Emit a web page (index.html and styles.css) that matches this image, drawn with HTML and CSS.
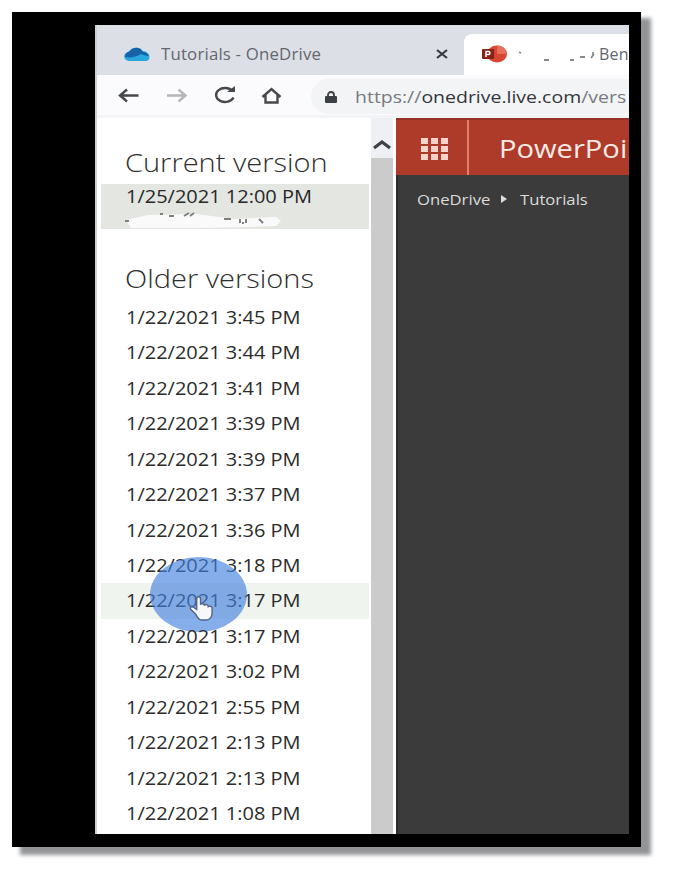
FILE: index.html
```
<!DOCTYPE html>
<html lang="en">
<head>
<meta charset="utf-8">
<title>Version history</title>
<link rel="stylesheet" href="styles.css">
</head>
<body>
<main class="frame">
  <div class="window">
    <div class="tabs">
      <div class="tab">
        <svg class="cloud" viewBox="0 0 26 16"><path d="M5 15a4.500 4.500 0 0 1-.5-9C7 1 15 0 18.500 5c4 0 7 3 7 6a4 4 0 0 1-4 4z" fill="#2aa7df"/><path d="M1 11C1 7 4 6 6 5c4-5 11-4 13 1 3 0 5 2 6 4-3 0-5-1-8-2-5 3-10 4-16 3z" fill="#1763a5"/></svg>
        <span class="tab-name">Tutorials - OneDrive</span>
        <svg class="close" viewBox="0 0 12 10"><path d="M1 1l10 8M11 1L1 9" stroke="#333940" stroke-width="2.200"/></svg>
      </div>
      <div class="tab active">
        <svg class="ppt" viewBox="0 0 26 18"><ellipse cx="15" cy="9" rx="10" ry="8.500" fill="#d84532"/><path d="M15 .5A10 8.500 0 0 1 25 9H15z" fill="#e8705a"/><rect x="0" y="4" width="12" height="10" rx="1" fill="#8a2119"/><path d="M4 12V6.500h2.500a1.500 1.500 0 0 1 0 3H4" fill="none" stroke="#fff" stroke-width="1.500"/></svg>
        <svg class="smudge" viewBox="0 0 80 20"><path d="M4 8l2 1M29 16h5M55 16h4M65 13h5M76 14l3-4M78 8v3" stroke="#888b8e" stroke-width="1.800" fill="none"/></svg>
        <span class="tab-name ben">Ben</span>
      </div>
    </div>
    <div class="toolbar">
      <svg class="nav" viewBox="0 0 170 40"><g fill="none" stroke="#45484c" stroke-width="2.400"><path d="M41.500 20.500h-18M30 14.500l-7 6 7 6"/><path d="M70 20.500h18M81.500 14.500l7 6-7 6" stroke="#b4b6b9"/><path d="M135.500 16a9 7 0 1 0 1 6.500"/><path d="M165.500 22l9-8 9 8M168.500 20v7.500h12V20"/></g><path d="M130 17h8v-6z" fill="#45484c"/></svg>
      <div class="address">
        <svg class="lock" viewBox="0 0 12 12"><path d="M3 6V4a3 3 0 0 1 6 0v2" fill="none" stroke="#3c4044" stroke-width="1.800"/><rect y="5" width="12" height="7" rx="1" fill="#3c4044"/></svg>
        <span class="url">https://<b>onedrive.live.com</b>/vers</span>
      </div>
    </div>
    <div class="page">
      <aside class="versions">
        <h2 class="current-title">Current version</h2>
        <div class="selected">
          <div class="date">1/25/2021 12:00 PM</div>
          <svg class="author" viewBox="0 0 170 20"><path d="M1 10l22-5 48-1 39 5 41-2 5 4-5 5-28 1-55 1H6z" fill="#fafafa"/><path d="M0 11h4M35 4h3M44 6h5M59 6l5-3M65 6l4-3M99 9h7M115 9v4M117 13h2M121 9v4M134 9l4 4" stroke="#7f817f" stroke-width="2" fill="none"/></svg>
        </div>
        <h2 class="older-title">Older versions</h2>
        <ul class="list">
          <li><span class="stamp">1/22/2021 3:45 PM</span></li>
          <li><span class="stamp">1/22/2021 3:44 PM</span></li>
          <li><span class="stamp">1/22/2021 3:41 PM</span></li>
          <li><span class="stamp">1/22/2021 3:39 PM</span></li>
          <li><span class="stamp">1/22/2021 3:39 PM</span></li>
          <li><span class="stamp">1/22/2021 3:37 PM</span></li>
          <li><span class="stamp">1/22/2021 3:36 PM</span></li>
          <li><span class="stamp">1/22/2021 3:18 PM</span></li>
          <li class="hover"><span class="stamp">1/22/2021 3:17 PM</span>
            <span class="halo"></span>
            <svg class="hand" viewBox="0 0 26 28"><path d="M7 20l-5-5c-2-2 1-4 3-2l3 2V4c0-3 4-3 4 0v6c1-2 4-1 4 1 1-2 4-1 4 1 2-1 4 0 4 2v5c0 4-3 7-6 7h-5c-3 0-4-3-6-6z" fill="#f7f8fb" stroke="#53648a" stroke-width="1.500"/></svg>
          </li>
          <li><span class="stamp">1/22/2021 3:17 PM</span></li>
          <li><span class="stamp">1/22/2021 3:02 PM</span></li>
          <li><span class="stamp">1/22/2021 2:55 PM</span></li>
          <li><span class="stamp">1/22/2021 2:13 PM</span></li>
          <li><span class="stamp">1/22/2021 2:13 PM</span></li>
          <li><span class="stamp">1/22/2021 1:08 PM</span></li>
        </ul>
      </aside>
      <div class="scrollbar">
        <div class="up"><svg class="chevron" viewBox="0 0 20 12"><path d="M2 10l8-6 8 6" fill="none" stroke="#3e4144" stroke-width="3.200"/></svg></div>
        <div class="thumb"></div>
      </div>
      <section class="viewer">
        <header class="banner">
          <div class="launcher"><div class="dots"><i></i><i></i><i></i><i></i><i></i><i></i><i></i><i></i><i></i></div></div>
          <span class="brand">PowerPoi</span>
        </header>
        <nav class="crumbs"><span class="crumb">OneDrive</span><span class="arrow"></span><span class="crumb">Tutorials</span></nav>
      </section>
    </div>
  </div>
</main>
</body>
</html>
```
FILE: styles.css
```
* { box-sizing: border-box; }
body { margin: 0; min-height: 882px; background: #fff; padding: 12px 0 0 12px; font-family: "Open Sans", "Noto Sans", sans-serif; }
svg { display: block; flex: none; overflow: visible; }
.frame { width: 629px; height: 835px; background: #000; padding: 13px 12px 13px 83px; box-shadow: 9px 7px 4px 1px #929496; }
.window { width: 534px; height: 809px; background: #fff; overflow: hidden; border-left: 2px solid #d0d0d0; }
.tabs { height: 50px; background: #dddfe6; display: flex; padding-top: 9px; }
.tab { width: 367px; height: 41px; flex: none; display: flex; align-items: center; padding: 0 16px 2px 27px; }
.cloud { width: 26px; height: 16px; }
.tab-name { font-size: 16px; color: #63666d; white-space: nowrap; margin-left: 11px; letter-spacing: .18px; transform: scaleX(1.05); transform-origin: left; }
.close { width: 12px; height: 10px; margin-left: auto; }
.active { width: 180px; background: #fff; border-radius: 8px 0 0 0; padding: 0 0 2px 18px; }
.ppt { width: 26px; height: 18px; }
.smudge { width: 80px; height: 20px; margin-left: 7px; }
.ben { margin-left: 4px; transform: none; }
.toolbar { height: 43px; background: #fbfbfd; border-bottom: 3px solid #f3f4f7; display: flex; }
.nav { width: 170px; height: 40px; }
.address { flex: 1; margin-left: 44px; height: 35px; margin-top: 4px; background: #f3f4f6; border-radius: 18px 0 0 18px; display: flex; align-items: center; padding-left: 14px; }
.lock { width: 12px; height: 12px; }
.url { margin-left: 18px; font-size: 17px; color: #777a7e; white-space: nowrap; transform: scaleX(1.145); transform-origin: left; }
.url b { font-weight: 400; color: #33363a; }
.page { display: flex; height: 716px; }
.versions { width: 274px; flex: none; color: #2b2b2b; }
h2 { font-weight: 300; font-size: 26px; line-height: 36px; margin: 0 0 0 28px; color: #2e2e2e; white-space: nowrap; transform: scaleX(1.115); transform-origin: left; }
.current-title { margin-top: 26px; }
.selected { height: 45px; width: 268px; margin: 4px 0 0 4px; background: #e4e6e2; padding-left: 25px; }
.date, .stamp { display: block; font-size: 18px; white-space: nowrap; transform: scaleX(1.11); transform-origin: left; width: max-content; }
.date { line-height: 24px; color: #272727; }
.author { width: 170px; height: 20px; margin: 2px 0 0 -1px; }
.older-title { margin-top: 31px; }
.list { list-style: none; margin: 4px 0 0; padding: 0; height: 531.500px; display: grid; grid-template-rows: repeat(15, 1fr); }
.list li { position: relative; width: 268px; margin-left: 4px; padding-left: 25px; line-height: 35px; }
.list .hover { background: #f0f4ef; }
.halo { position: absolute; left: 49px; top: -26px; width: 97px; height: 75px; border-radius: 50%; background: rgba(65, 128, 224, .64); }
.hand { position: absolute; left: 88px; top: 12px; width: 25px; height: 27px; }
.scrollbar { width: 22px; flex: none; background: #cbcbcb; }
.up { height: 40px; background: #eef0f3; padding: 20px 0 0 1px; }
.chevron { width: 20px; height: 12px; }
.viewer { margin-left: 3px; flex: 1; min-width: 0; background: #3b3b3b; border-left: 2px solid #2b2b2b; }
.banner { height: 57px; background: #ae3b29; border-top: 2px solid #973324; margin-left: -2px; display: flex; align-items: center; }
.launcher { width: 73px; height: 55px; border-right: 2px solid #df806f; flex: none; padding: 18px 0 0 25px; }
.dots { display: grid; grid-template-columns: repeat(3, 7px); gap: 2px 3px; }
.dots i { height: 6px; background: #f7d3cb; }
.brand { font-size: 26px; color: #fbeae6; margin-left: 30px; white-space: nowrap; transform: scaleX(1.12); transform-origin: left; }
.crumbs { display: flex; align-items: center; height: 48px; padding-left: 19px; font-size: 14px; color: #dcdcdc; }
.crumb { transform: scaleX(1.19); transform-origin: left; }
.arrow { margin: 0 13px 0 22px; border-left: 6px solid #ddd; border-top: 4px solid transparent; border-bottom: 4px solid transparent; }
```
